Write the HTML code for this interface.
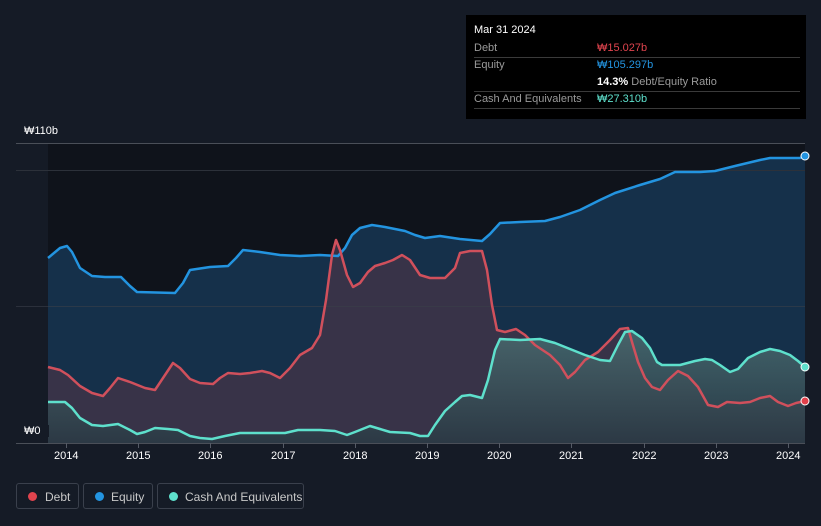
<!DOCTYPE html>
<html><head><meta charset="utf-8"><style>
body{margin:0;width:821px;height:526px;background:#151b26;font-family:"Liberation Sans","Noto Sans CJK KR",sans-serif;overflow:hidden;position:relative}
.t{position:absolute;font-size:11px;color:#fff}
.tip{position:absolute;left:466px;top:15px;width:340px;height:104px;background:#000;}
.tip .r{position:absolute;left:8px;width:326px;border-bottom:1px solid #3a3a3a;font-size:11px;color:#9a9a9a;height:17px;line-height:17px}
.lg{position:absolute;top:483px;height:26px;border:1px solid #3a404c;border-radius:3px;color:#c8c8c8;font-size:12px;line-height:26px;box-sizing:border-box}
.lg i{position:absolute;left:11px;top:8px;width:9px;height:9px;border-radius:50%}
</style></head><body>
<svg width="821" height="526" style="position:absolute;left:0;top:0">
<defs>
<linearGradient id="cg" x1="0" y1="0" x2="0" y2="1"><stop offset="0" stop-color="#4a6c70"/><stop offset="1" stop-color="#2a3a44"/></linearGradient>
</defs>
<rect x="48" y="143" width="757" height="300" fill="#0f131b"/>
<path id="eq" d="M48,258 L60,248 67,246 72,252 80,268 92,276 105,277 121,277 130,286 137,292 175,293 183,283 190,270 210,267 228,266 236,258 243,250 260,252 280,255 300,256 320,255 338,256 345,248 352,235 360,228 372,225 385,227 405,231 415,235 425,238 440,236 460,239 482,241 490,234 500,223 520,222 545,221 560,217 580,210 600,200 615,193 640,185 660,179 675,172 700,172 715,171 735,166 760,160 770,158 800,158 805,156" fill="none"/>
<path d="M48,258 L60,248 67,246 72,252 80,268 92,276 105,277 121,277 130,286 137,292 175,293 183,283 190,270 210,267 228,266 236,258 243,250 260,252 280,255 300,256 320,255 338,256 345,248 352,235 360,228 372,225 385,227 405,231 415,235 425,238 440,236 460,239 482,241 490,234 500,223 520,222 545,221 560,217 580,210 600,200 615,193 640,185 660,179 675,172 700,172 715,171 735,166 760,160 770,158 800,158 805,156 L805,443 48,443Z" fill="#15304a"/>
<path d="M48,367 L60,370 68,375 80,386 92,393 103,396 110,388 118,378 130,382 145,388 155,390 165,375 173,363 180,368 190,379 200,383 213,384 220,378 228,373 240,374 250,373 262,371 270,373 280,378 290,368 300,355 312,348 320,335 326,300 332,255 336,240 340,250 347,275 353,287 360,283 368,272 375,266 385,263 393,260 402,255 410,260 420,275 430,278 445,278 455,268 460,253 470,251 482,251 487,270 492,305 497,330 505,332 516,329 525,335 535,345 550,355 560,365 568,378 575,372 585,360 598,352 610,340 620,329 628,328 632,342 638,362 645,378 652,387 660,390 668,380 678,371 688,376 698,387 708,405 718,407 727,402 740,403 750,402 760,398 770,396 778,402 788,406 796,403 805,401 L805,443 48,443Z" fill="#3c3448" fill-opacity="0.9"/>
<path d="M48,402 L65,402 72,408 80,418 92,425 103,426 118,424 130,430 137,434 145,432 155,428 168,429 178,430 190,436 200,438 212,439 225,436 240,433 255,433 270,433 285,433 298,430 320,430 335,431 347,435 355,432 370,426 380,429 390,432 410,433 420,436 428,436 435,425 445,411 455,402 462,396 470,395 482,398 488,380 495,350 500,339 520,340 540,339 555,343 570,349 585,355 600,360 610,361 618,345 625,332 632,331 642,338 650,348 657,362 662,365 680,365 695,361 705,359 712,360 720,365 730,372 738,369 748,358 760,352 770,349 780,351 790,355 798,361 805,367 L805,443 48,443Z" fill="url(#cg)" fill-opacity="0.85"/>
<line x1="16" y1="143.5" x2="805" y2="143.5" stroke="#4a4f58"/>
<line x1="16" y1="170.5" x2="805" y2="170.5" stroke="#2c313a"/>
<line x1="16" y1="306.5" x2="805" y2="306.5" stroke="#3a3f4a" stroke-opacity="0.6"/>
<line x1="16" y1="443.5" x2="805" y2="443.5" stroke="#4a4f58"/>
<g fill="none" stroke-width="2.5" stroke-linejoin="round">
<path d="M48,258 L60,248 67,246 72,252 80,268 92,276 105,277 121,277 130,286 137,292 175,293 183,283 190,270 210,267 228,266 236,258 243,250 260,252 280,255 300,256 320,255 338,256 345,248 352,235 360,228 372,225 385,227 405,231 415,235 425,238 440,236 460,239 482,241 490,234 500,223 520,222 545,221 560,217 580,210 600,200 615,193 640,185 660,179 675,172 700,172 715,171 735,166 760,160 770,158 800,158 805,156" stroke="#2394e0"/>
<path d="M48,367 L60,370 68,375 80,386 92,393 103,396 110,388 118,378 130,382 145,388 155,390 165,375 173,363 180,368 190,379 200,383 213,384 220,378 228,373 240,374 250,373 262,371 270,373 280,378 290,368 300,355 312,348 320,335 326,300 332,255 336,240 340,250 347,275 353,287 360,283 368,272 375,266 385,263 393,260 402,255 410,260 420,275 430,278 445,278 455,268 460,253 470,251 482,251 487,270 492,305 497,330 505,332 516,329 525,335 535,345 550,355 560,365 568,378 575,372 585,360 598,352 610,340 620,329 628,328 632,342 638,362 645,378 652,387 660,390 668,380 678,371 688,376 698,387 708,405 718,407 727,402 740,403 750,402 760,398 770,396 778,402 788,406 796,403 805,401" stroke="#d0505c"/>
<path d="M48,402 L65,402 72,408 80,418 92,425 103,426 118,424 130,430 137,434 145,432 155,428 168,429 178,430 190,436 200,438 212,439 225,436 240,433 255,433 270,433 285,433 298,430 320,430 335,431 347,435 355,432 370,426 380,429 390,432 410,433 420,436 428,436 435,425 445,411 455,402 462,396 470,395 482,398 488,380 495,350 500,339 520,340 540,339 555,343 570,349 585,355 600,360 610,361 618,345 625,332 632,331 642,338 650,348 657,362 662,365 680,365 695,361 705,359 712,360 720,365 730,372 738,369 748,358 760,352 770,349 780,351 790,355 798,361 805,367" stroke="#5ee0cc"/>
</g>
<circle cx="805" cy="156" r="4" fill="#2394e0" stroke="#fff" stroke-width="1"/>
<circle cx="805" cy="401" r="4" fill="#e0404a" stroke="#fff" stroke-width="1"/>
<circle cx="805" cy="367" r="4" fill="#5ee0cc" stroke="#fff" stroke-width="1"/>
<g stroke="#555b66"><line x1="66.5" y1="443" x2="66.5" y2="448"/><line x1="138.5" y1="443" x2="138.5" y2="448"/><line x1="210.5" y1="443" x2="210.5" y2="448"/><line x1="283.5" y1="443" x2="283.5" y2="448"/><line x1="355.5" y1="443" x2="355.5" y2="448"/><line x1="427.5" y1="443" x2="427.5" y2="448"/><line x1="499.5" y1="443" x2="499.5" y2="448"/><line x1="571.5" y1="443" x2="571.5" y2="448"/><line x1="644.5" y1="443" x2="644.5" y2="448"/><line x1="716.5" y1="443" x2="716.5" y2="448"/><line x1="788.5" y1="443" x2="788.5" y2="448"/></g>
</svg>
<div class="t" style="left:24px;top:125px">₩110b</div>
<div class="t" style="left:16px;top:425px;background:#151b26;padding:0 8px 0 8px">₩0</div>
<div class="t" style="left:54px;top:450px">2014</div>
<div class="t" style="left:126px;top:450px">2015</div>
<div class="t" style="left:198px;top:450px">2016</div>
<div class="t" style="left:271px;top:450px">2017</div>
<div class="t" style="left:343px;top:450px">2018</div>
<div class="t" style="left:415px;top:450px">2019</div>
<div class="t" style="left:487px;top:450px">2020</div>
<div class="t" style="left:559px;top:450px">2021</div>
<div class="t" style="left:632px;top:450px">2022</div>
<div class="t" style="left:704px;top:450px">2023</div>
<div class="t" style="left:776px;top:450px">2024</div>
<div class="tip">
<div style="position:absolute;left:8px;top:9px;color:#fff;font-size:11px">Mar 31 2024</div>
<div class="r" style="top:25px">Debt<span style="position:absolute;left:123px;color:#e0444e">₩15.027b</span></div>
<div class="r" style="top:42px;border:none">Equity<span style="position:absolute;left:123px;color:#2394e0">₩105.297b</span></div>
<div class="r" style="top:59px"><span style="position:absolute;left:123px;color:#fff;font-weight:bold">14.3%<span style="color:#9a9a9a;font-weight:normal"> Debt/Equity Ratio</span></span></div>
<div class="r" style="top:76px">Cash And Equivalents<span style="position:absolute;left:123px;color:#5ee0cc">₩27.310b</span></div>
</div>
<div class="lg" style="left:16px;width:63px"><i style="background:#e0444e"></i><span style="position:absolute;left:28px">Debt</span></div>
<div class="lg" style="left:83px;width:70px"><i style="background:#2394e0"></i><span style="position:absolute;left:27px">Equity</span></div>
<div class="lg" style="left:157px;width:147px"><i style="background:#5ee0cc"></i><span style="position:absolute;left:27px">Cash And Equivalents</span></div>
</body></html>
